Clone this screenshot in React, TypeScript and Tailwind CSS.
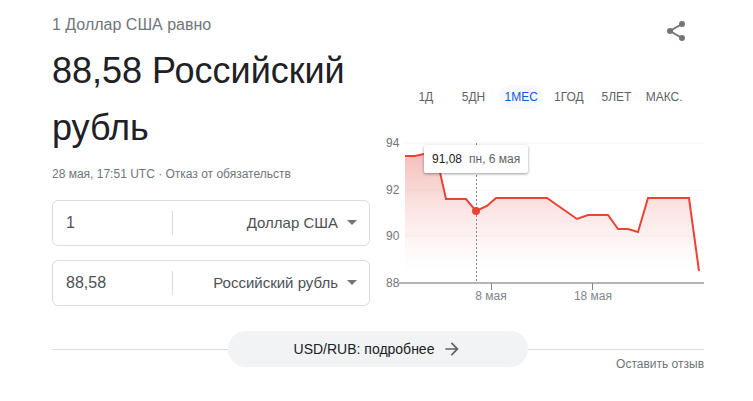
import { useState } from "react";

const ranges = ["1Д", "5ДН", "1МЕС", "1ГОД", "5ЛЕТ", "МАКС."];

const line =
  "19,26 29,26 38,24 49,20 60,69 80,69 90,81 101,76 110,68 161,68 191,89 202,85 222,85 232,99 242,99 252,102 262,68 303,68 313,141";

const yLabels = [
  { label: "94", y: 13 },
  { label: "92", y: 60 },
  { label: "90", y: 106 },
  { label: "88", y: 153 },
];

const xLabels = [
  { label: "8 мая", x: 105 },
  { label: "18 мая", x: 207 },
];

type FieldProps = { id: string; value: string; currency: string };

function CurrencyField({ id, value, currency }: FieldProps) {
  const [amount, setAmount] = useState(value);
  const [unit, setUnit] = useState(currency);
  return (
    <div className="flex h-[46px] items-center rounded-md border border-[#dadce0]">
      <input
        id={id}
        aria-label={"Сумма: " + currency}
        value={amount}
        onChange={(e) => setAmount(e.target.value)}
        className="w-[119px] min-w-0 shrink-0 bg-transparent pl-[13px] text-base text-[#4d5156] outline-none"
      />
      <div className="h-6 border-l border-[#dadce0]" />
      <div className="relative h-full min-w-0 flex-1">
        <select
          aria-label={"Валюта: " + currency}
          value={unit}
          onChange={(e) => setUnit(e.target.value)}
          className="h-full w-full appearance-none bg-transparent pr-[31px] text-right text-[15px] text-[#4d5156] outline-none [text-align-last:right]"
        >
          <option>Доллар США</option>
          <option>Российский рубль</option>
        </select>
        <svg
          aria-hidden="true"
          viewBox="0 0 10 5"
          className="pointer-events-none absolute top-[19px] right-3 h-[5px] w-[10px] fill-[#757575]"
        >
          <path d="M0 0h10L5 5z" />
        </svg>
      </div>
    </div>
  );
}

function Chart() {
  return (
    <div className="relative mt-[21px]">
      <svg
        viewBox="0 0 318 176"
        role="img"
        aria-label="Курс доллара за месяц"
        className="block w-full text-xs"
      >
        <defs>
          <linearGradient id="fade" x1="0" y1="20" x2="0" y2="142" gradientUnits="userSpaceOnUse">
            <stop offset="0" stopColor="#e0453a" stopOpacity="0.36" />
            <stop offset="0.45" stopColor="#e0453a" stopOpacity="0.15" />
            <stop offset="0.8" stopColor="#e0453a" stopOpacity="0.04" />
            <stop offset="1" stopColor="#e0453a" stopOpacity="0" />
          </linearGradient>
        </defs>
        {yLabels.map(({ label, y }) => (
          <g key={label}>
            <path d={`M19 ${y}H318`} stroke="#fafafa" strokeWidth="2" />
            <text x="0" y={y + 4} fill="#70757a">
              {label}
            </text>
          </g>
        ))}
        <polygon points={`${line} 313,152 19,152`} fill="url(#fade)" />
        <path d="M13 153H318" stroke="#b4b5bb" strokeWidth="2" />
        {xLabels.map(({ label, x }) => (
          <g key={label}>
            <path d={`M${x + (x > 200 ? -0.5 : 0.5)} 153v7`} stroke="#80868b" />
            <text x={x} y="170" textAnchor="middle" fill="#80868b">
              {label}
            </text>
          </g>
        ))}
        <path d="M90.5 13V152" stroke="#80868b" strokeDasharray="2 2" />
        <polyline points={line} fill="none" stroke="#ea4335" strokeWidth="2" />
        <circle cx="90" cy="81" r="4" fill="#ea4335" />
      </svg>
      <div className="absolute top-[15px] left-[38px] flex h-7 items-center gap-[7px] rounded-xs bg-white px-2 text-xs whitespace-nowrap shadow-[0_1px_3px_rgba(0,0,0,0.4)]">
        <span className="text-[#202124]">91,08</span>
        <span className="text-[#5f6368]">пн, 6 мая</span>
      </div>
    </div>
  );
}

export default function App() {
  const [active, setActive] = useState("1МЕС");
  return (
    <main className="bg-white pr-[49px] pl-[52px] font-['Liberation_Sans',Arial,sans-serif]">
      <div className="grid grid-cols-2 gap-4">
        <section className="pt-3">
          <p className="text-base leading-[26px] text-[#70757a]">1 Доллар США равно</p>
          <h1 className="mt-1 text-4xl leading-[57px] text-[#202124]">88,58 Российский рубль</h1>
          <p className="mt-2 text-xs leading-5 text-[#70757a]">
            28 мая, 17:51 UTC · <a href="#disclaimer">Отказ от обязательств</a>
          </p>
          <div className="mt-4 flex flex-col gap-[14px]">
            <CurrencyField id="from" value="1" currency="Доллар США" />
            <CurrencyField id="to" value="88,58" currency="Российский рубль" />
          </div>
        </section>

        <section className="pt-[19px]">
          <div className="flex justify-end pr-4">
            <button type="button" aria-label="Поделиться" className="size-6">
              <svg
                viewBox="0 0 24 24"
                className="size-6 fill-[#757575] stroke-[#757575]"
                strokeWidth="2"
              >
                <path d="M18 5L6 12l12 7" fill="none" />
                <circle cx="18" cy="5" r="3" stroke="none" />
                <circle cx="6" cy="12" r="3" stroke="none" />
                <circle cx="18" cy="19" r="3" stroke="none" />
              </svg>
            </button>
          </div>
          <div className="mt-[42px] grid grid-cols-6 px-4">
            {ranges.map((range) => (
              <button
                key={range}
                type="button"
                aria-pressed={range === active}
                onClick={() => setActive(range)}
                className={
                  "mx-0.5 h-6 rounded-full text-xs " +
                  (range === active ? "bg-[#f8f9fa] text-[#1a56db]" : "text-[#5f6368]")
                }
              >
                {range}
              </button>
            ))}
          </div>
          <Chart />
        </section>
      </div>

      <footer className="mt-[25px]">
        <div className="flex items-center">
          <div className="flex-1 border-t border-[#dadce0]" />
          <button
            type="button"
            className="flex h-9 w-[300px] items-center justify-center gap-2 rounded-full bg-[#f1f3f4] text-sm text-[#202124]"
          >
            USD/RUB: подробнее
            <svg viewBox="0 0 24 24" aria-hidden="true" className="size-5 fill-[#5f6368]">
              <path d="M12 4l-1.41 1.41L16.17 11H4v2h12.17l-5.58 5.59L12 20l8-8z" />
            </svg>
          </button>
          <div className="flex-1 border-t border-[#dadce0]" />
        </div>
        <div className="-mt-3 flex justify-end">
          <a href="#feedback" className="text-xs leading-[18px] text-[#70757a]">
            Оставить отзыв
          </a>
        </div>
      </footer>
    </main>
  );
}
